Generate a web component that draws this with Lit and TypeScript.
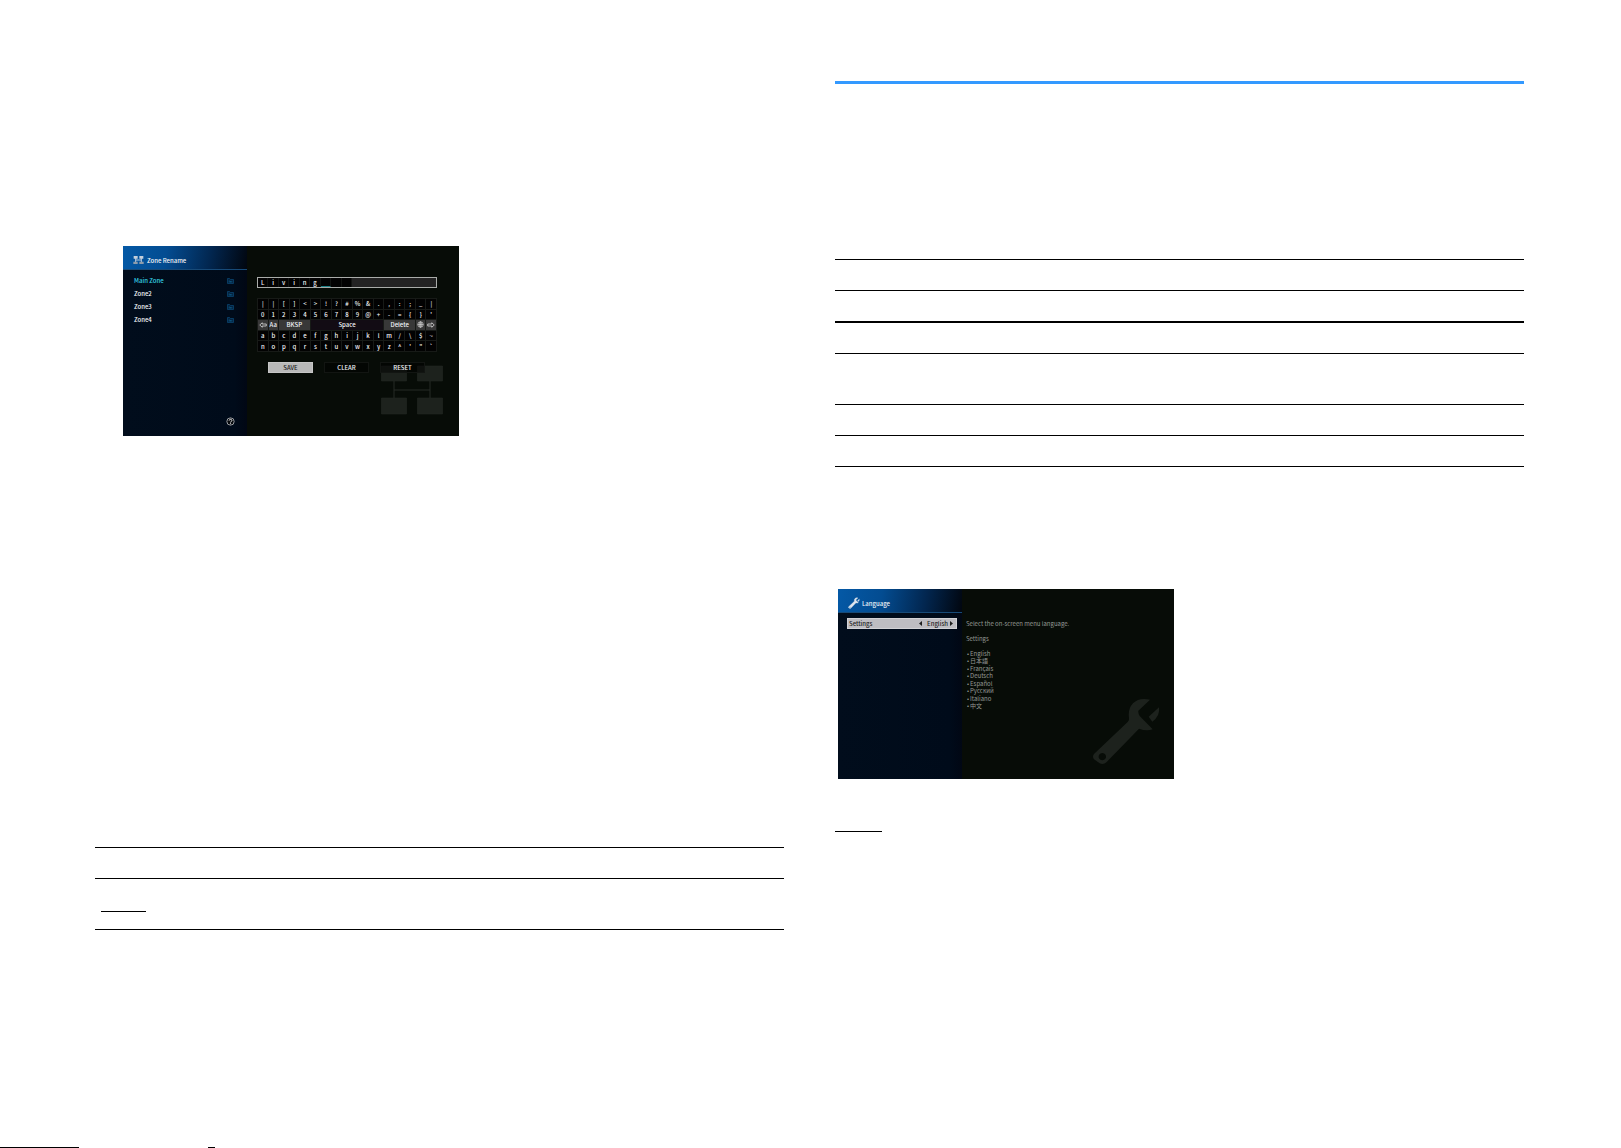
import { LitElement, html, css, svg } from "lit";
import { customElement, property } from "lit/decorators.js";
import { classMap } from "lit/directives/class-map.js";

const screenStyles = css`
  :host {
    display: block;
    flex: none;
    width: 336px;
    max-width: 100%;
    font-family: "Noto Sans CJK JP", "Noto Sans", sans-serif;
    font-size: 6px;
    font-weight: 500;
    line-height: 7px;
    color: #f2f5f8;
  }
  * {
    box-sizing: border-box;
  }
  button,
  input {
    font: inherit;
    color: inherit;
    margin: 0;
    padding: 0;
    border: 0;
    border-radius: 0;
    background: none;
  }
  .screen {
    display: grid;
    grid-template-columns: 124px 1fr;
    min-height: 190px;
    background: #070c07;
  }
  .side {
    display: flex;
    flex-direction: column;
    background: linear-gradient(90deg, #010d1c, #000b1a 90%, #010714);
  }
  .title {
    display: flex;
    align-items: center;
    gap: 3px;
    height: 24px;
    padding: 5px 0 0 10px;
    border-bottom: 1px solid #174a78;
    background: linear-gradient(100deg, #0459a6, #034c91 35%, #02264f 70%, #01060f);
  }
  h2 {
    margin: 0;
    font-size: 6px;
    font-weight: 500;
  }
  .main {
    position: relative;
    min-width: 0;
  }
  .watermark {
    position: absolute;
    pointer-events: none;
  }
`;

const folderIcon = svg`<svg width="7" height="6" viewBox="0 0 14 12" aria-hidden="true">
  <path d="M1 1h4l2 2h6v8H1z" fill="#04223f" stroke="#0b4a78" stroke-width="1.4"/>
  <path d="M4.500 9V5M7 9V6M9.500 9V6" stroke="#0f6391" stroke-width="1.4"/>
</svg>`;

const zonesIcon = svg`<svg width="11" height="10" viewBox="0 0 33 30" aria-hidden="true">
  <path d="M8 6v18M25 6v18M8 15h17" fill="none" stroke="#b8cbe0" stroke-width="3"/>
  <path d="M2 3h12v8H2zM19 3h12v8H19z" fill="#c3cfdb"/>
  <path d="M1 20h13v7H1zM19 20h13v7H19z" fill="#8d9cab"/>
</svg>`;

const globeIcon = svg`<svg width="7" height="7" viewBox="0 0 14 14" aria-hidden="true">
  <g fill="none" stroke="#d5d5d5" stroke-width="1.3">
    <circle cx="7" cy="7" r="5.5"/><ellipse cx="7" cy="7" rx="2.5" ry="5.5"/><path d="M1.5 7h11M7 1.5v11"/>
  </g>
</svg>`;

const arrowLeft = svg`<svg width="8" height="6" viewBox="0 0 16 12" aria-hidden="true">
  <path d="M1.500 6l5-4.500v2.500h8v4h-8v2.500z" fill="none" stroke="#e0e0e0" stroke-width="1.500"/>
</svg>`;

const arrowRight = svg`<svg width="8" height="6" viewBox="0 0 16 12" aria-hidden="true">
  <path d="M14.500 6l-5-4.500v2.500h-8v4h8v2.500z" fill="none" stroke="#e0e0e0" stroke-width="1.500"/>
</svg>`;

const helpIcon = svg`<svg width="9" height="9" viewBox="0 0 18 18" aria-hidden="true">
  <circle cx="9" cy="9" r="7.3" fill="#05080c" stroke="#c9ccd0" stroke-width="1.5"/>
  <path d="M6.300 7.200c0-3.600 5.600-3.400 5.400 0C11.600 9 9.200 9 9.100 11M9.100 12.600v1.800" fill="none" stroke="#f2f2f2" stroke-width="2"/>
</svg>`;

const wrenchShape = svg`
  <path fill-rule="evenodd" d="M12 180 L113 84 Q118 78 117 72 Q113 45 129 28 Q148 9 180 17 L145 50 Q144 58 149 66 L188 106 Q170 113 147 104 L50 204 Q40 214 29 208 L12 196 Q6 188 12 180 Z M37 177 a11 11 0 1 0 0.010 0 Z"/>
  <path d="M207 40 L176 68 L187 83 Q211 66 207 40 Z"/>`;

type Key = { label: string; span?: number; kind?: string; icon?: unknown };

const keyRow = (chars: string): Key[] => [...chars].map((label) => ({ label }));

const KEYS: Key[] = [
  ...keyRow("||[]<>!?#%&.,:;_|"),
  ...keyRow("0123456789@+-={}'"),
  { label: "Cursor left", kind: "fn", icon: arrowLeft },
  { label: "Aa", kind: "fn" },
  { label: "BKSP", span: 3, kind: "fn" },
  { label: "Space", span: 7, kind: "space" },
  { label: "Delete", span: 3, kind: "fn" },
  { label: "Input language", kind: "fn", icon: globeIcon },
  { label: "Cursor right", kind: "fn", icon: arrowRight },
  ...keyRow("abcdefghijklm/\\$~"),
  ...keyRow("nopqrstuvwxyz^'\"`"),
];

@customElement("zone-rename-screen")
export class ZoneRenameScreen extends LitElement {
  static styles = [
    screenStyles,
    css`
      .zones {
        list-style: none;
        margin: 0;
        padding: 4px 13px 0 11px;
      }
      .zone {
        display: flex;
        align-items: center;
        justify-content: space-between;
        width: 100%;
        height: 13px;
      }
      .zone.current {
        color: #35d3e6;
      }
      .help {
        display: flex;
        align-self: flex-end;
        margin: auto 12px 10px 0;
      }
      .main {
        display: flex;
        flex-direction: column;
        padding: 31px 22px 0 10px;
      }
      .entry {
        display: grid;
        grid-template-columns: repeat(17, 1fr);
        height: 11px;
        border: 1px solid #a9aca9;
        background: #232323;
      }
      .cell {
        width: 100%;
        min-width: 0;
        height: 9px;
        text-align: center;
        background: #020202;
        border-right: 1px solid #111411;
        outline: 0;
      }
      .cell.caret {
        border-bottom: 1px solid #1b8086;
      }
      .keys {
        display: grid;
        grid-template-columns: repeat(17, 1fr);
        grid-auto-rows: 1fr;
        gap: 1px;
        height: 54px;
        margin-top: 10px;
        padding: 1px;
        background: #171a17;
      }
      .key {
        display: flex;
        align-items: center;
        justify-content: center;
        min-width: 0;
        background: #020202;
      }
      .key.fn {
        background: #383838;
      }
      .key.space {
        background: #120c14;
      }
      .span3 {
        grid-column: span 3;
      }
      .span7 {
        grid-column: span 7;
      }
      .actions {
        position: relative;
        z-index: 1;
        display: grid;
        grid-template-columns: repeat(3, 45px);
        gap: 11px;
        margin: 10px 0 0 11px;
      }
      .action {
        height: 11px;
        background: rgba(0, 0, 0, 0.5);
        border: 1px solid #121512;
      }
      .action.selected {
        color: #1c1c1c;
        background: #b9b9b9;
        border-color: #c6c6c6;
      }
      .watermark {
        right: 16px;
        bottom: 21px;
      }
    `,
  ];

  render() {
    const zones = ["Main Zone", "Zone2", "Zone3", "Zone4"];
    return html`<div class="screen">
      <div class="side">
        <div class="title">${zonesIcon}<h2>Zone Rename</h2></div>
        <ul class="zones">
          ${zones.map(
            (z, i) => html`<li>
              <button class=${classMap({ zone: true, current: i === 0 })}><span>${z}</span>${folderIcon}</button>
            </li>`
          )}
        </ul>
        <button class="help" aria-label="Help">${helpIcon}</button>
      </div>
      <div class="main">
        <div class="entry">
          ${[..."Living", "", "", ""].map(
            (c, i) => html`<input
              class=${classMap({ cell: true, caret: i === 6 })}
              maxlength="1"
              aria-label="Character ${i + 1}"
              .value=${c}
            />`
          )}
        </div>
        <div class="keys">
          ${KEYS.map(
            (k) => html`<button
              class=${classMap({
                key: true,
                fn: k.kind === "fn",
                space: k.kind === "space",
                span3: k.span === 3,
                span7: k.span === 7,
              })}
              aria-label=${k.label}
            >${k.icon ?? k.label}</button>`
          )}
        </div>
        <div class="actions">
          <button class="action selected">SAVE</button>
          <button class="action">CLEAR</button>
          <button class="action">RESET</button>
        </div>
        <svg class="watermark" width="62" height="50" viewBox="0 0 62 50" aria-hidden="true">
          <path d="M13 16v17M49 16v17M13 25h36" fill="none" stroke="#262b26" stroke-width="1"/>
          <g fill="#1d221d" stroke="#262b26" stroke-width="0.5">
            <path d="M0.500 1h25v15h-25zM36.500 1h25v15h-25zM0.500 33h25v16h-25zM36.500 33h25v16h-25z"/>
          </g>
        </svg>
      </div>
    </div>`;
  }
}

@customElement("language-screen")
export class LanguageScreen extends LitElement {
  static styles = [
    screenStyles,
    css`
      .setting {
        display: flex;
        align-items: center;
        gap: 2px;
        height: 11px;
        margin: 5px 5px 0 9px;
        padding: 0 3px 0 1px;
        color: #1e1e1e;
        background: #bebdc2;
        border: 1px solid #d2d2d6;
      }
      .name {
        margin-right: auto;
      }
      .step {
        display: flex;
      }
      .value {
        margin-left: 3px;
      }
      .main {
        padding: 31px 4px 0;
        font-weight: 400;
        color: #959995;
      }
      p {
        margin: 0 0 8px;
      }
      ul {
        display: flex;
        flex-direction: column;
        justify-content: space-between;
        height: 59px;
        margin: 0;
        padding: 0 0 0 1px;
        list-style: none;
      }
      li::before {
        content: "•";
        margin-right: 1px;
      }
      .title {
        gap: 2px;
      }
      .watermark {
        right: 9px;
        bottom: 10px;
        fill: #1d221d;
      }
    `,
  ];

  render() {
    const languages = ["English", "日本語", "Français", "Deutsch", "Español", "Русский", "Italiano", "中文"];
    return html`<div class="screen">
      <div class="side">
        <div class="title">
          <svg width="12" height="12" viewBox="0 0 220 220" fill="#dfe6ee" stroke="#dfe6ee" stroke-width="8" aria-hidden="true">${wrenchShape}</svg>
          <h2>Language</h2>
        </div>
        <div class="setting">
          <span class="name">Settings</span>
          <button class="step" aria-label="Previous">
            <svg width="3" height="5" viewBox="0 0 3 5"><path d="M3 0v5L0 2.500z" fill="#1e1e1e"/></svg>
          </button>
          <span class="value">English</span>
          <button class="step" aria-label="Next">
            <svg width="3" height="5" viewBox="0 0 3 5"><path d="M0 0v5l3-2.500z" fill="#1e1e1e"/></svg>
          </button>
        </div>
      </div>
      <div class="main">
        <p>Select the on-screen menu language.</p>
        <p>Settings</p>
        <ul>
          ${languages.map((l) => html`<li>${l}</li>`)}
        </ul>
        <svg class="watermark" width="75" height="75" viewBox="0 0 225 225" aria-hidden="true">${wrenchShape}</svg>
      </div>
    </div>`;
  }
}

@customElement("ruled-rows")
export class RuledRows extends LitElement {
  static styles = css`
    :host {
      display: block;
      border-bottom: 1px solid #000;
    }
    .row {
      box-sizing: border-box;
      height: 31px;
      border-top: 1px solid #000;
    }
    .heavy {
      height: 32px;
      border-top-width: 2px;
    }
    .tall {
      height: 51px;
    }
    .mark {
      width: 45px;
      height: 1px;
      margin: 32px 0 0 6px;
      background: #000;
    }
  `;

  @property({ attribute: false }) rows: string[] = [];

  render() {
    return this.rows.map(
      (kind) => html`<div
        class=${classMap({ row: true, heavy: kind === "heavy", tall: kind === "tall" || kind === "marked" })}
      >${kind === "marked" ? html`<div class="mark"></div>` : ""}</div>`
    );
  }
}

@customElement("app-root")
export class AppRoot extends LitElement {
  static styles = css`
    :host {
      display: flex;
      flex-direction: column;
      min-height: 100vh;
      background: #fff;
    }
    .spread {
      display: grid;
      grid-template-columns: minmax(0, 1fr) minmax(0, 1fr);
      column-gap: 51px;
      padding: 81px 97px 0 95px;
    }
    .page {
      display: flex;
      flex-direction: column;
    }
    .accent {
      height: 3px;
      background: #3399ff;
    }
    .zone {
      margin: 165px 0 411px 28px;
    }
    .table {
      margin-top: 175px;
    }
    .language {
      margin: 122px 0 52px 3px;
    }
    .mark {
      width: 47px;
      height: 1px;
      background: #000;
    }
    .foot {
      display: flex;
      gap: 129px;
      height: 1px;
      margin-top: auto;
    }
    .long {
      width: 79px;
      background: #000;
    }
    .short {
      width: 7px;
      background: #000;
    }
  `;

  render() {
    return html`
      <main class="spread">
        <section class="page">
          <zone-rename-screen class="zone"></zone-rename-screen>
          <ruled-rows .rows=${["plain", "marked"]}></ruled-rows>
        </section>
        <section class="page">
          <div class="accent"></div>
          <ruled-rows class="table" .rows=${["plain", "plain", "heavy", "tall", "plain", "plain"]}></ruled-rows>
          <language-screen class="language"></language-screen>
          <div class="mark"></div>
        </section>
      </main>
      <footer class="foot">
        <div class="long"></div>
        <div class="short"></div>
      </footer>
    `;
  }
}
